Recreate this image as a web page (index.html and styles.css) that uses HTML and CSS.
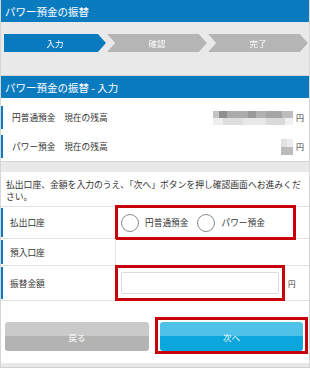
FILE: index.html
```html
<!DOCTYPE html>
<html lang="ja">
<head>
<meta charset="utf-8">
<link rel="stylesheet" href="styles.css">
</head>
<body>
<div class="frame">
  <div class="hdr">パワー預金の振替</div>
  <div class="steps-area">
    <div class="steps">
      <div class="step first active">入力</div>
      <div class="step">確認</div>
      <div class="step">完了</div>
    </div>
  </div>
  <div class="hdr hdr2">パワー預金の振替 - 入力</div>
  <div class="panel">
    <div class="bal-row">
      <span class="bal-label">円普通預金　現在の残高</span>
      <span class="bal-val"><span class="blur blur1"></span><span class="yen">円</span></span>
    </div>
    <div class="bal-row">
      <span class="bal-label">パワー預金　現在の残高</span>
      <span class="bal-val"><span class="blur blur2"></span><span class="yen">円</span></span>
    </div>
  </div>
  <div class="gap"></div>
  <div class="form">
    <p class="note">払出口座、金額を入力のうえ、「次へ」ボタンを押し確認画面へお進みください。</p>
    <div class="frow r1">
      <div class="flabel"><span>払出口座</span></div>
      <div class="fval">
        <div class="redbox radios">
          <label class="radio"><span class="circle"></span>円普通預金</label>
          <label class="radio"><span class="circle"></span>パワー預金</label>
        </div>
      </div>
    </div>
    <div class="frow r2">
      <div class="flabel"><span>預入口座</span></div>
      <div class="fval"></div>
    </div>
    <div class="frow r3">
      <div class="flabel"><span>振替金額</span></div>
      <div class="fval amount">
        <div class="redbox inputbox"><div class="input"></div></div>
        <span class="yen2">円</span>
      </div>
    </div>
    <div class="buttons">
      <div class="btn back">戻る</div>
      <div class="redbox2"><div class="btn next">次へ</div></div>
    </div>
  </div>
</div>
</body>
</html>
```
FILE: styles.css
```css
* { box-sizing: border-box; }
html, body { margin: 0; padding: 0; }
body {
  font-family: "Noto Sans CJK JP", "Noto Sans", sans-serif;
  color: #333;
}
.frame {
  width: 310px;
  height: 368px;
  background: #e9e9e9;
  border-left: 1px solid #d6d6d6;
  border-right: 1px solid #d6d6d6;
  border-bottom: 1px solid #d0d0d0;
  overflow: hidden;
}
.hdr {
  height: 22px;
  background: #0b7bc0;
  color: #fff;
  font-size: 10.5px;
  display: flex;
  align-items: center;
  padding-left: 4px;
}
.hdr2 {
  height: 23px;
  font-size: 10.5px;
  border-top: 1px solid #d4d4d4;
}
.steps-area {
  height: 53px;
  padding: 12px 0 0 3px;
}
.steps {
  display: flex;
  gap: 1px;
  filter: drop-shadow(0 0 0.7px #fff) drop-shadow(0 0 0.5px #fff);
}
.step {
  width: 100px;
  height: 18px;
  background: #b5b5b5;
  color: #fff;
  font-size: 8.5px;
  display: flex;
  align-items: center;
  justify-content: center;
  clip-path: polygon(0 0, calc(100% - 8px) 0, 100% 50%, calc(100% - 8px) 100%, 0 100%, 8px 50%);
}
.step.first {
  width: 102px;
  clip-path: polygon(0 0, calc(100% - 8px) 0, 100% 50%, calc(100% - 8px) 100%, 0 100%);
}
.step.active { background: #0b7bc0; }
.panel {
  background: #fff;
  padding: 8px 0 2px;
  height: 63px;
}
.bal-row {
  height: 23px;
  margin-bottom: 6px;
  border-left: 2px solid #0b7bc0;
  display: flex;
  align-items: center;
  justify-content: space-between;
  padding-left: 9px;
  padding-right: 5px;
  font-size: 8.7px;
}
.bal-val { display: flex; align-items: center; gap: 3px; }
.yen { font-size: 8px; }
.blur { display: block; }
.blur1 {
  width: 80px;
  height: 14px;
  background:
    linear-gradient(90deg, #c4c4c4 0 8%, #8f8f8f 8% 18%, #acacac 18% 44%, #9a9a9a 44% 54%, #b1b1b1 54% 66%, #a6a6a6 66% 86%, #bdbdbd 86%) top / 100% 50% no-repeat,
    linear-gradient(90deg, #eeeeee 0 12%, #dedede 12% 38%, #e8e8e8 38% 66%, #dadada 66% 90%, #f0f0f0 90%) bottom / 100% 50% no-repeat;
}
.blur2 {
  width: 12px;
  height: 16px;
  background:
    linear-gradient(90deg, #e2e2e2 0 50%, #ececec 50%) top / 100% 50% no-repeat,
    linear-gradient(#bcbcbc, #bcbcbc) bottom / 100% 50% no-repeat;
}
.gap {
  height: 11px;
  border-top: 1px solid #d4d4d4;
}
.form {
  background: #fff;
  height: 191px;
}
.note {
  margin: 0;
  padding: 7px 8px 4px 5px;
  font-size: 8.8px;
  line-height: 12px;
  height: 35px;
  word-break: break-all;
  border-bottom: 1px solid #e2e2e2;
}
.frow {
  display: flex;
  border-bottom: 1px solid #e2e2e2;
}
.r1 { height: 32px; }
.r2 { height: 27px; }
.r3 { height: 35px; }
.flabel {
  width: 115px;
  border-right: 1px solid #e2e2e2;
  padding: 1px 0;
  display: flex;
}
.flabel span {
  flex: 1;
  border-left: 2px solid #0b7bc0;
  padding-left: 7px;
  font-size: 8.7px;
  display: flex;
  align-items: center;
}
.fval { flex: 1; display: flex; align-items: center; }
.redbox {
  border: 3px solid #c8000b;
  margin-left: -1px;
}
.radios {
  width: 181px;
  height: 35px;
  display: flex;
  align-items: center;
  gap: 9px;
  padding-left: 3px;
}
.radio {
  display: flex;
  align-items: center;
  gap: 6px;
  font-size: 8.7px;
}
.circle {
  width: 18px;
  height: 18px;
  border: 1px solid #8a8a8a;
  border-radius: 50%;
  background: #fff;
}
.amount { align-items: stretch; }
.inputbox {
  width: 170px;
  height: 36px;
  margin-top: -1px;
  padding: 4px 3px;
}
.input {
  height: 100%;
  border: 1px solid #dcdcdc;
  border-radius: 2px;
  background: #fff;
}
.yen2 {
  font-size: 7.5px;
  display: flex;
  align-items: center;
  padding-left: 3px;
}
.buttons {
  display: flex;
  justify-content: space-between;
  padding: 16px 1px 0 4px;
}
.btn {
  height: 29px;
  border-radius: 3px;
  color: #fff;
  font-size: 8.5px;
  display: flex;
  align-items: center;
  justify-content: center;
}
.back {
  width: 144px;
  margin-top: 5px;
  background: linear-gradient(#cacaca 0 50%, #b3b3b3 50%);
}
.redbox2 {
  border: 3px solid #c8000b;
  padding: 2px;
  width: 153px;
  height: 37px;
}
.next {
  background: linear-gradient(#4fc2e7 0 50%, #0aa6dc 50%);
}
```
